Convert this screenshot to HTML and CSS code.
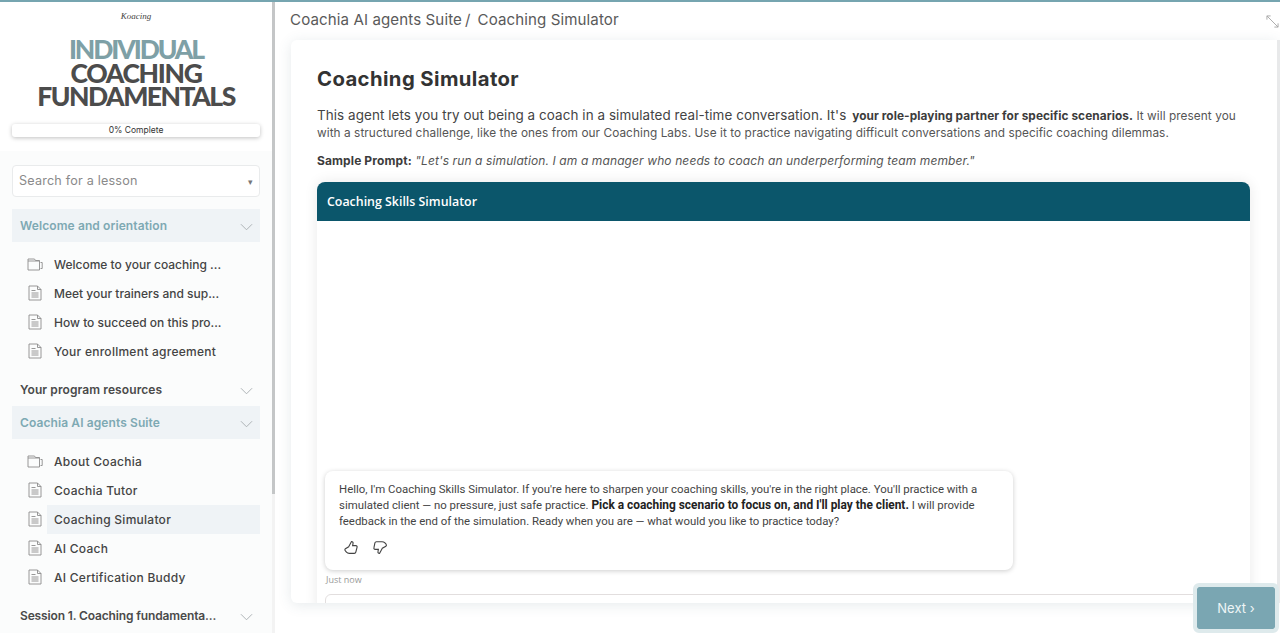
FILE: index.html
```html
<!DOCTYPE html>
<html lang="en">
<head>
<meta charset="utf-8">
<title>Coaching Simulator</title>
<link rel="stylesheet" href="styles.css">
</head>
<body>
<div class="topline"></div>
<div class="app">
  <aside class="sidebar">
    <div class="brand">
      <div class="logo">Koacing</div>
      <div class="course-title">
        <div class="ct-a">INDIVIDUAL</div>
        <div class="ct-b">COACHING</div>
        <div class="ct-c">FUNDAMENTALS</div>
      </div>
      <div class="progress">0% Complete</div>
    </div>
    <div class="nav">
      <div class="search"><span>Search for a lesson</span><span class="caret">▾</span></div>
      <div class="section open"><span>Welcome and orientation</span><svg class="chev" viewBox="0 0 14 8"><path d="M1 1l6 6 6-6"/></svg></div>
      <ul class="items">
        <li class="trunc"><svg class="ico" viewBox="0 0 16 16"><use href="#cam"/></svg><span>Welcome to your coaching ...</span></li>
        <li class="trunc"><svg class="ico" viewBox="0 0 16 16"><use href="#doc"/></svg><span>Meet your trainers and sup...</span></li>
        <li class="trunc"><svg class="ico" viewBox="0 0 16 16"><use href="#doc"/></svg><span>How to succeed on this pro...</span></li>
        <li><svg class="ico" viewBox="0 0 16 16"><use href="#doc"/></svg><span>Your enrollment agreement</span></li>
      </ul>
      <div class="section"><span>Your program resources</span><svg class="chev" viewBox="0 0 14 8"><path d="M1 1l6 6 6-6"/></svg></div>
      <div class="section open"><span>Coachia AI agents Suite</span><svg class="chev" viewBox="0 0 14 8"><path d="M1 1l6 6 6-6"/></svg></div>
      <ul class="items">
        <li><svg class="ico" viewBox="0 0 16 16"><use href="#cam"/></svg><span>About Coachia</span></li>
        <li><svg class="ico" viewBox="0 0 16 16"><use href="#doc"/></svg><span>Coachia Tutor</span></li>
        <li class="active"><svg class="ico" viewBox="0 0 16 16"><use href="#doc"/></svg><span>Coaching Simulator</span></li>
        <li><svg class="ico" viewBox="0 0 16 16"><use href="#doc"/></svg><span>AI Coach</span></li>
        <li><svg class="ico" viewBox="0 0 16 16"><use href="#doc"/></svg><span>AI Certification Buddy</span></li>
      </ul>
      <div class="section trunc-section"><span>Session 1. Coaching fundamenta...</span><svg class="chev" viewBox="0 0 14 8"><path d="M1 1l6 6 6-6"/></svg></div>
    </div>
  </aside>
  <div class="side-scroll"><div class="side-thumb"></div></div>
  <main class="main">
    <header class="crumbs">
      <span>Coachia AI agents Suite</span><span class="sep">/</span><span>Coaching Simulator</span>
      <svg class="expand" viewBox="0 0 14 14"><path d="M1 1l12 12M1 1h4M1 1v4M13 13H9M13 13V9"/></svg>
    </header>
    <div class="card-wrap">
      <section class="card">
        <h1>Coaching Simulator</h1>
        <p class="intro"><span class="lead">This agent lets you try out being a coach in a simulated real-time conversation. It's </span> <b>your role-playing partner for specific scenarios.</b> It will present you with a structured challenge, like the ones from our Coaching Labs. Use it to practice navigating difficult conversations and specific coaching dilemmas.</p>
        <p class="sample"><b>Sample Prompt:</b> <i>"Let's run a simulation. I am a manager who needs to coach an underperforming team member."</i></p>
        <div class="chat">
          <div class="chat-head">Coaching Skills Simulator</div>
          <div class="chat-body">
            <div class="bubble">
              <p>Hello, I'm Coaching Skills Simulator. If you're here to sharpen your coaching skills, you're in the right place. You'll practice with a simulated client — no pressure, just safe practice. <b>Pick a coaching scenario to focus on, and I'll play the client.</b> I will provide feedback in the end of the simulation. Ready when you are — what would you like to practice today?</p>
              <div class="thumbs">
                <svg viewBox="0 0 16 16"><path d="M5 7.200 8 1.600c1.200 0 1.900.9 1.600 2.200L9.200 6h3.400c1 0 1.600.9 1.300 1.800l-1.300 5.200c-.2.800-.8 1.200-1.600 1.200H5.600c-1.200 0-2.200-.4-3-1.300L1.300 11.400c-.5-.7-.4-1.500.2-2.100Z"/></svg>
                <svg viewBox="0 0 16 16"><path d="M11 8.800 8 14.400c-1.200 0-1.900-.9-1.600-2.200L6.800 10H3.400c-1 0-1.600-.9-1.300-1.800l1-5.200c.2-.8.800-1.200 1.600-1.200h6c1.200 0 2 .2 2.800 1L15 4.500c.5.700.4 1.500-.2 2.100Z"/></svg>
              </div>
            </div>
            <div class="stamp">Just now</div>
            <div class="composer"></div>
          </div>
        </div>
      </section>
    </div>
  </main>
  <div class="page-scroll"></div>
</div>
<button class="next">Next ›</button>
<svg class="defs" width="0" height="0" aria-hidden="true">
  <symbol id="cam" viewBox="0 0 16 16"><path d="M1 5V3h6.500l1 1.500H12.500v9.500H1V5h11.500M13.500 6.500h1.700v6h-1.700"/></symbol>
  <symbol id="doc" viewBox="0 0 16 16"><path d="M2 1h8.500l3.500 3.500V15H2ZM10.500 1v3.500H14M4.500 5.500h4M4.500 8h7M4.500 10h7M4.500 12h7"/></symbol>
</svg>
</body>
</html>
```
FILE: styles.css
```css
* { box-sizing: border-box; }
html, body { margin: 0; height: 633px; overflow: hidden; background: #fff; }
body { font-family: Inter, "Open Sans", sans-serif; color: #3f3f3f; position: relative; }
.topline { height: 2px; background: #76a5b0; }
.defs { display: block; }
.app { display: flex; height: 631px; }

.sidebar { width: 272px; flex: none; overflow: hidden; background: #fbfcfc; }
.brand { background: #fff; height: 149px; padding-top: 9px; display: flex; flex-direction: column; align-items: center; }
.logo { font: italic 9px/10px "Liberation Serif", serif; color: #444; height: 10px; margin-bottom: 17px; }
.course-title { font-family: Lato, Inter, sans-serif; font-weight: 900; font-size: 26.500px; line-height: 23.500px; text-align: center; color: #4c4c4c; width: 100%; }
.ct-a { color: #7ea0a6; letter-spacing: -2.100px; }
.ct-b { letter-spacing: -1.300px; }
.ct-c { letter-spacing: -1.500px; }
.progress { margin-top: 15px; width: 248px; height: 13px; background: #fff; border-radius: 3px; box-shadow: 0 1px 4px rgba(0,0,0,.25); font-size: 8.500px; line-height: 13px; text-align: center; color: #333; flex: none; }
.nav { padding: 14px 12px 0; }
.search { height: 32px; border: 1px solid #e9ebec; border-radius: 4px; background: #fff; padding: 0 6px; display: flex; align-items: center; justify-content: space-between; font-size: 12.600px; letter-spacing: .2px; color: #8a8a8a; margin-bottom: 12px; }
.search span:first-child { margin-top: -2px; }
.caret { font-size: 9px; color: #777; }
.section { height: 33px; display: flex; align-items: center; justify-content: space-between; padding: 0 7px 0 8px; font-size: 12px; font-weight: 600; letter-spacing: .1px; color: #4a4a4a; white-space: nowrap; }
.section.open { background: #eff3f6; color: #7ea9b3; }
.section.trunc-section { letter-spacing: -.14px; }
.chev { width: 13px; height: 8px; fill: none; stroke: #a9aeb1; stroke-width: 1; margin-top: 2px; }
.items { list-style: none; margin: 0; padding: 8px 0 11px; }
.items li { height: 29px; display: flex; align-items: center; margin-left: 35px; padding: 0 0 1px 7px; font-size: 12px; font-weight: 500; letter-spacing: .26px; color: #444; position: relative; white-space: nowrap; }
.items li.trunc { letter-spacing: 0; }
.items li.active { background: #eff3f6; }
.ico { position: absolute; left: -20px; top: 6px; width: 16px; height: 16px; fill: none; stroke: #8c8c8c; stroke-width: .9; }
.items + .section { height: 25px; }
.items + .section + .section { margin-top: 4px; }

.side-scroll { width: 3px; flex: none; background: #f3f3f3; }
.side-thumb { height: 492px; background: #c4c6c7; }

.main { flex: 1; min-width: 0; display: flex; flex-direction: column; padding-left: 16px; background: #fff; }
.crumbs { height: 38px; flex: none; display: flex; align-items: center; font-size: 15.100px; letter-spacing: .1px; color: #5a5a5a; position: relative; padding-bottom: 4px; margin-left: -1px; }
.sep { margin: 0 7px 0 3px; }
.expand { position: absolute; right: -2px; top: 13px; width: 13px; height: 13px; fill: none; stroke: #a8a8a8; stroke-width: 1; }
.card-wrap { height: 563px; flex: none; }
.card { height: 563px; background: #fff; border-radius: 6px 0 0 6px; box-shadow: 0 2px 14px rgba(60,90,110,.13); padding: 26px 27px 0 26px; overflow: hidden; }
h1 { margin: 0 0 16px; font-size: 20.300px; line-height: 25px; font-weight: 700; color: #333; letter-spacing: .4px; }
.intro { margin: 0 0 10px; font-size: 11.800px; line-height: 17px; color: #555; letter-spacing: .07px; }
.lead { font-size: 13.450px; color: #444; }
.intro b { font-weight: 700; color: #3c3c3c; font-size: 11.850px; margin-left: 2px; }
.sample { margin: 0 0 13px; font-size: 12px; line-height: 17px; color: #555; letter-spacing: .11px; }
.sample b { color: #3c3c3c; }
.chat { height: 430px; border-radius: 8px 8px 0 0; box-shadow: 0 0 14px rgba(0,0,0,.09); background: #fff; width: 933px; }
.chat-head { height: 39px; background: #0b566b; border-radius: 8px 8px 0 0; color: #fff; font-family: "Open Sans", sans-serif; font-weight: 600; font-size: 12.400px; line-height: 39px; padding-left: 10px; }
.chat-body { padding: 250px 8px 0; }
.bubble { width: 688px; height: 99px; background: #fff; border-radius: 8px; box-shadow: 0 1px 5px rgba(0,0,0,.2); padding: 10px 14px 0; font-family: Roboto, "Open Sans", sans-serif; font-size: 11.400px; line-height: 16px; color: #444; }
.bubble p { margin: 0; }
.bubble b { color: #222; font-size: 11.900px; }
.thumbs { display: flex; gap: 13px; margin: 11px 0 0 5px; }
.thumbs svg { width: 15px; height: 15px; fill: none; stroke: #444; stroke-width: 1.200; }
.stamp { font-family: "Open Sans", sans-serif; font-size: 9px; line-height: 12px; margin-top: 4px; margin-left: 1px; color: #999; }
.composer { height: 40px; margin-top: 8px; border: 1px solid #e2dede; border-radius: 6px; }
.page-scroll { width: 3px; flex: none; background: #e8e9ea; margin-top: 38px; height: 563px; }
.next { position: absolute; left: 1193px; top: 583px; width: 86px; height: 50px; border: 4px solid #deeaec; border-radius: 6px; background: #7aa6b2; background-clip: padding-box; color: #eef5f6; font-family: Inter, sans-serif; font-size: 13px; padding: 0; }
```
